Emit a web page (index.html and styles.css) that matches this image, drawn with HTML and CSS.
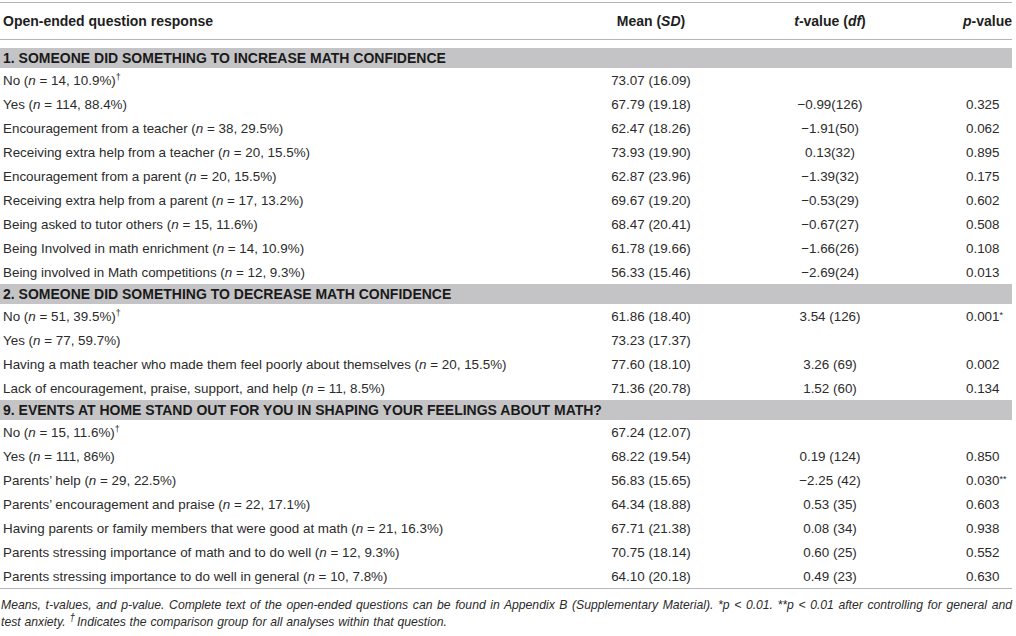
FILE: index.html
```html
<!DOCTYPE html>
<html>
<head>
<meta charset="utf-8">
<link rel="stylesheet" href="styles.css">
</head>
<body>
<div class="table">
  <div class="row head">
    <div class="c1">Open-ended question response</div>
    <div class="c2">Mean (<i>SD</i>)</div>
    <div class="c3"><i>t</i>-value (<i>df</i>)</div>
    <div class="c4"><i>p</i>-value</div>
  </div>
  <div class="body">
    <div class="row section"><div class="c1">1. SOMEONE DID SOMETHING TO INCREASE MATH CONFIDENCE</div></div>
    <div class="row"><div class="c1">No (<i>n</i> = 14, 10.9%)<sup>†</sup></div><div class="c2">73.07 (16.09)</div><div class="c3"></div><div class="c4"></div></div>
    <div class="row"><div class="c1">Yes (<i>n</i> = 114, 88.4%)</div><div class="c2">67.79 (19.18)</div><div class="c3">−0.99(126)</div><div class="c4">0.325</div></div>
    <div class="row"><div class="c1">Encouragement from a teacher (<i>n</i> = 38, 29.5%)</div><div class="c2">62.47 (18.26)</div><div class="c3">−1.91(50)</div><div class="c4">0.062</div></div>
    <div class="row"><div class="c1">Receiving extra help from a teacher (<i>n</i> = 20, 15.5%)</div><div class="c2">73.93 (19.90)</div><div class="c3">0.13(32)</div><div class="c4">0.895</div></div>
    <div class="row"><div class="c1">Encouragement from a parent (<i>n</i> = 20, 15.5%)</div><div class="c2">62.87 (23.96)</div><div class="c3">−1.39(32)</div><div class="c4">0.175</div></div>
    <div class="row"><div class="c1">Receiving extra help from a parent (<i>n</i> = 17, 13.2%)</div><div class="c2">69.67 (19.20)</div><div class="c3">−0.53(29)</div><div class="c4">0.602</div></div>
    <div class="row"><div class="c1">Being asked to tutor others (<i>n</i> = 15, 11.6%)</div><div class="c2">68.47 (20.41)</div><div class="c3">−0.67(27)</div><div class="c4">0.508</div></div>
    <div class="row"><div class="c1">Being Involved in math enrichment (<i>n</i> = 14, 10.9%)</div><div class="c2">61.78 (19.66)</div><div class="c3">−1.66(26)</div><div class="c4">0.108</div></div>
    <div class="row"><div class="c1">Being involved in Math competitions (<i>n</i> = 12, 9.3%)</div><div class="c2">56.33 (15.46)</div><div class="c3">−2.69(24)</div><div class="c4">0.013</div></div>
    <div class="row section"><div class="c1">2. SOMEONE DID SOMETHING TO DECREASE MATH CONFIDENCE</div></div>
    <div class="row"><div class="c1">No (<i>n</i> = 51, 39.5%)<sup>†</sup></div><div class="c2">61.86 (18.40)</div><div class="c3">3.54 (126)</div><div class="c4">0.001<span class="ast">*</span></div></div>
    <div class="row"><div class="c1">Yes (<i>n</i> = 77, 59.7%)</div><div class="c2">73.23 (17.37)</div><div class="c3"></div><div class="c4"></div></div>
    <div class="row"><div class="c1">Having a math teacher who made them feel poorly about themselves (<i>n</i> = 20, 15.5%)</div><div class="c2">77.60 (18.10)</div><div class="c3">3.26 (69)</div><div class="c4">0.002</div></div>
    <div class="row"><div class="c1">Lack of encouragement, praise, support, and help (<i>n</i> = 11, 8.5%)</div><div class="c2">71.36 (20.78)</div><div class="c3">1.52 (60)</div><div class="c4">0.134</div></div>
    <div class="row section"><div class="c1">9. EVENTS AT HOME STAND OUT FOR YOU IN SHAPING YOUR FEELINGS ABOUT MATH?</div></div>
    <div class="row"><div class="c1">No (<i>n</i> = 15, 11.6%)<sup>†</sup></div><div class="c2">67.24 (12.07)</div><div class="c3"></div><div class="c4"></div></div>
    <div class="row"><div class="c1">Yes (<i>n</i> = 111, 86%)</div><div class="c2">68.22 (19.54)</div><div class="c3">0.19 (124)</div><div class="c4">0.850</div></div>
    <div class="row"><div class="c1">Parents’ help (<i>n</i> = 29, 22.5%)</div><div class="c2">56.83 (15.65)</div><div class="c3">−2.25 (42)</div><div class="c4">0.030<span class="ast">**</span></div></div>
    <div class="row"><div class="c1">Parents’ encouragement and praise (<i>n</i> = 22, 17.1%)</div><div class="c2">64.34 (18.88)</div><div class="c3">0.53 (35)</div><div class="c4">0.603</div></div>
    <div class="row"><div class="c1">Having parents or family members that were good at math (<i>n</i> = 21, 16.3%)</div><div class="c2">67.71 (21.38)</div><div class="c3">0.08 (34)</div><div class="c4">0.938</div></div>
    <div class="row"><div class="c1">Parents stressing importance of math and to do well (<i>n</i> = 12, 9.3%)</div><div class="c2">70.75 (18.14)</div><div class="c3">0.60 (25)</div><div class="c4">0.552</div></div>
    <div class="row"><div class="c1">Parents stressing importance to do well in general (<i>n</i> = 10, 7.8%)</div><div class="c2">64.10 (20.18)</div><div class="c3">0.49 (23)</div><div class="c4">0.630</div></div>
  </div>
  <p class="note">Means, t-values, and p-value. Complete text of the open-ended questions can be found in Appendix B (Supplementary Material). *p &lt; 0.01. **p &lt; 0.01 after controlling for general and test anxiety. <sup class="dag">†</sup>Indicates the comparison group for all analyses within that question.</p>
</div>
</body>
</html>
```

FILE: styles.css
```css
html, body {
  margin: 0;
  padding: 0;
  background: #ffffff;
}
body {
  font-family: "Liberation Sans", Arial, sans-serif;
  font-size: 13.4px;
  color: #2b2b2b;
}
.table {
  width: 1012px;
  padding-top: 2px;
}
.row {
  display: grid;
  grid-template-columns: 590px 122px 236px 64px;
  align-items: center;
  height: 24px;
}
.head {
  height: 36px;
  border-top: 1px solid #b5b5b5;
  border-bottom: 1px solid #b5b5b5;
  font-weight: bold;
  font-size: 14px;
  color: #1e1e1e;
}
.body {
  padding-top: 8px;
  border-bottom: 1px solid #b5b5b5;
}
.c1 {
  padding-left: 3px;
  white-space: nowrap;
}
.c2, .c3 {
  text-align: center;
  white-space: nowrap;
}
.c4 {
  white-space: nowrap;
  padding-left: 18px;
}
.head .c4 {
  padding-left: 15px;
}
.section {
  display: block;
  height: 20px;
  line-height: 20px;
  background: #c4c4c6;
  font-weight: bold;
  font-size: 14px;
  color: #1a1a1a;
}
.section .c1 {
  padding-left: 3px;
}
sup {
  font-size: 9px;
  line-height: 0;
  vertical-align: 5px;
}
.ast {
  font-size: 9px;
  vertical-align: 3px;
  line-height: 0;
}
.note {
  margin: 8px 0 0 0;
  padding-left: 1px;
  font-size: 12.2px;
  line-height: 17px;
  font-style: italic;
  word-spacing: 0.45px;
  text-align: justify;
  color: #2b2b2b;
}
.note .dag {
  font-size: 10px;
  vertical-align: 5px;
  margin-right: 2px;
}
```
